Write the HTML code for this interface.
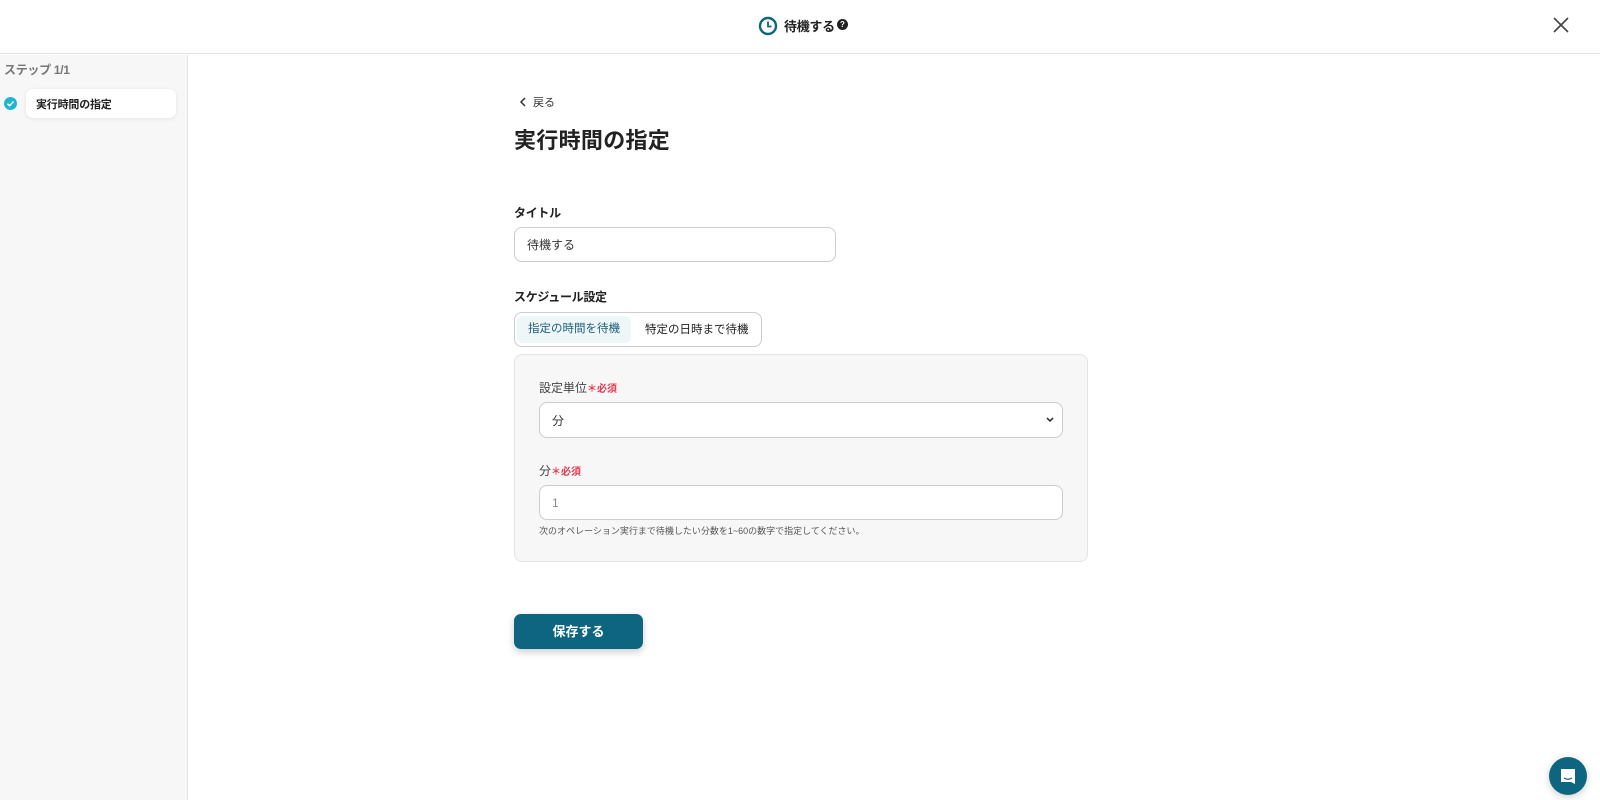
<!DOCTYPE html>
<html><head><meta charset="utf-8"><style>
*{box-sizing:border-box;margin:0;padding:0}
body{width:1600px;height:800px;overflow:hidden;background:#fff;font-family:"Liberation Sans","Noto Sans CJK JP",sans-serif;color:#222;position:relative}
.hdr{position:absolute;left:0;top:0;width:1600px;height:54px;border-bottom:1px solid #e4e4e4;background:#fff}
.side{position:absolute;left:0;top:55px;width:188px;height:745px;background:#f7f7f7;border-right:1px solid #e4e4e4}
.abs{position:absolute}
.lbl{font-size:12px;font-weight:bold;color:#222;letter-spacing:-0.3px}
.inp{position:absolute;border:1px solid #ccc;border-radius:8px;background:#fff;font-size:12px;color:#333;padding-left:12px;display:flex;align-items:center}
.req{color:#e8384f;font-size:10px;font-weight:bold}
</style></head><body>
<div class="hdr">
 <svg class="abs" style="left:758px;top:16px" width="20" height="20" viewBox="0 0 20 20"><circle cx="10" cy="10" r="8" fill="none" stroke="#0e6580" stroke-width="2.4"/><path d="M10 5.5V10.5H13.5" fill="none" stroke="#0e6580" stroke-width="1.8"/></svg>
 <div class="abs" style="left:784px;top:16px;font-size:13px;font-weight:bold;letter-spacing:-0.3px">待機する</div>
 <div class="abs" style="left:837px;top:19px;width:11px;height:11px;border-radius:50%;background:#222;color:#fff;font-size:8px;font-weight:bold;text-align:center;line-height:11px">?</div>
 <svg class="abs" style="left:1553px;top:17px" width="16" height="16" viewBox="0 0 16 16"><path d="M1 1L15 15M15 1L1 15" stroke="#444" stroke-width="1.6"/></svg>
</div>
<div class="side">
 <div class="abs" style="left:4px;top:6px;font-size:12px;font-weight:bold;color:#777;letter-spacing:-0.3px">ステップ 1/1</div>
 <div class="abs" style="left:4px;top:42px;width:13px;height:13px;border-radius:50%;background:#1eb7d0"><svg width="13" height="13" viewBox="0 0 13 13"><path d="M3.5 6.8L5.6 8.7L9.5 4.5" fill="none" stroke="#fff" stroke-width="1.5"/></svg></div>
 <div class="abs" style="left:26px;top:34px;width:150px;height:29px;background:#fff;border-radius:7px;box-shadow:0 1px 4px rgba(0,0,0,.08);font-size:11px;font-weight:bold;padding:7px 10px;letter-spacing:-0.2px">実行時間の指定</div>
</div>
<svg class="abs" style="left:519px;top:97px" width="8" height="10" viewBox="0 0 8 10"><path d="M6 1L2 5L6 9" fill="none" stroke="#333" stroke-width="1.5"/></svg>
<div class="abs" style="left:533px;top:94px;font-size:11px;color:#333">戻る</div>
<div class="abs" style="left:514px;top:123px;font-size:22px;font-weight:bold;letter-spacing:0.3px">実行時間の指定</div>
<div class="abs lbl" style="left:514px;top:204px">タイトル</div>
<div class="inp" style="left:514px;top:227px;width:322px;height:35px">待機する</div>
<div class="abs lbl" style="left:514px;top:288px">スケジュール設定</div>
<div class="abs" style="left:514px;top:312px;width:248px;height:35px;border:1px solid #ccc;border-radius:8px;background:#fff"></div>
<div class="abs" style="left:517px;top:316px;width:114px;height:27px;background:#eef6f8;border-radius:6px;color:#1d5f78;font-size:11.5px;text-align:center;line-height:27px">指定の時間を待機</div>
<div class="abs" style="left:645px;top:321px;font-size:11.5px">特定の日時まで待機</div>
<div class="abs" style="left:514px;top:354px;width:574px;height:208px;background:#f7f7f7;border:1px solid #e4e4e4;border-radius:8px"></div>
<div class="abs" style="left:539px;top:379px;font-size:12px;color:#444">設定単位<span class="req">＊必須</span></div>
<div class="inp" style="left:539px;top:402px;width:524px;height:36px">分<svg style="position:absolute;right:8px" width="8" height="6" viewBox="0 0 8 6"><path d="M1 1L4 4L7 1" fill="none" stroke="#222" stroke-width="1.5"/></svg></div>
<div class="abs" style="left:539px;top:462px;font-size:12px;color:#444">分<span class="req">＊必須</span></div>
<div class="inp" style="left:539px;top:485px;width:524px;height:35px;color:#888">1</div>
<div class="abs" style="left:539px;top:524px;font-size:9px;color:#555">次のオペレーション実行まで待機したい分数を1~60の数字で指定してください。</div>
<div class="abs" style="left:514px;top:614px;width:129px;height:35px;background:#0e6580;border-radius:7px;color:#fff;font-size:13px;font-weight:bold;text-align:center;line-height:35px;box-shadow:0 3px 8px rgba(0,0,0,.2)">保存する</div>
<div class="abs" style="left:1549px;top:757px;width:38px;height:38px;border-radius:50%;background:#0e6580;box-shadow:0 2px 8px rgba(0,0,0,.2)"><svg width="38" height="38" viewBox="0 0 38 38"><path d="M12 12h14v15l-4-2h-10z" fill="#fff"/><path d="M15 21q4 2.5 8 0" fill="none" stroke="#0e6580" stroke-width="1.2"/></svg></div>
</body></html>
